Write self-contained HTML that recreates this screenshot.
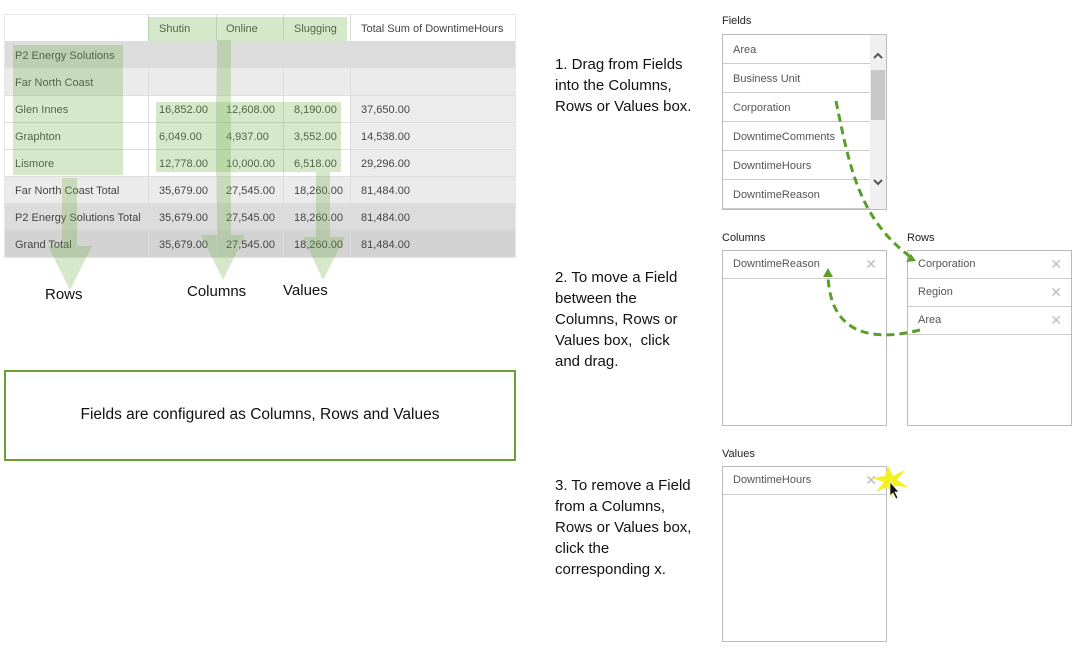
<!DOCTYPE html><html><head><style>
body{margin:0;width:1088px;height:656px;background:#fff;position:relative;font-family:"Segoe UI","Liberation Sans",sans-serif;overflow:hidden}
.a{position:absolute}
.c{position:absolute;font-size:11px;color:#444;line-height:27px}
.g{position:absolute;background:rgba(120,180,80,.3)}
.box{position:absolute;border:1px solid #bbb;background:#fff}
.it{height:27px;border-bottom:1px solid #ccc;font-size:11px;color:#555;line-height:27px;padding-left:10px;position:relative}
.x{position:absolute;right:9px;top:0;color:#bbb;font-size:14px}
.lbl{position:absolute;font-size:11px;color:#222}
.ins{position:absolute;left:555px;font-size:15px;line-height:21px;color:#111}
</style></head><body>
<div class="a" style="left:4px;top:14px;width:512px;height:244px;background:#e6e6e6"></div>
<div class="a" style="left:5px;top:15px;width:510px;height:26px;background:#fff"></div>
<div class="a" style="left:5px;top:41px;width:510px;height:27px;background:#dcdcdc"></div>
<div class="a" style="left:5px;top:68px;width:510px;height:27px;background:#ebebeb"></div>
<div class="a" style="left:5px;top:95px;width:345px;height:81px;background:#fff"></div>
<div class="a" style="left:350px;top:95px;width:165px;height:81px;background:#ececec"></div>
<div class="a" style="left:5px;top:176px;width:510px;height:27px;background:#ebebeb"></div>
<div class="a" style="left:5px;top:203px;width:510px;height:27px;background:#dcdcdc"></div>
<div class="a" style="left:5px;top:230px;width:510px;height:27px;background:#d3d3d3"></div>
<div class="a" style="left:148px;top:14px;width:1px;height:244px;background:#ddd"></div>
<div class="a" style="left:216px;top:14px;width:1px;height:244px;background:#ddd"></div>
<div class="a" style="left:283px;top:14px;width:1px;height:244px;background:#ddd"></div>
<div class="a" style="left:350px;top:14px;width:1px;height:244px;background:#ddd"></div>
<div class="a" style="left:5px;top:95px;width:510px;height:1px;background:#ddd"></div>
<div class="a" style="left:5px;top:122px;width:510px;height:1px;background:#ddd"></div>
<div class="a" style="left:5px;top:149px;width:510px;height:1px;background:#ddd"></div>
<div class="a" style="left:5px;top:176px;width:510px;height:1px;background:#ddd"></div>
<div class="c" style="left:159px;top:16px">Shutin</div><div class="c" style="left:226px;top:16px">Online</div><div class="c" style="left:294px;top:16px">Slugging</div><div class="c" style="left:361px;top:16px">Total Sum of DowntimeHours</div>
<div class="c" style="left:15px;top:43px">P2 Energy Solutions</div>
<div class="c" style="left:15px;top:70px">Far North Coast</div>
<div class="c" style="left:15px;top:97px">Glen Innes</div><div class="c" style="left:159px;top:97px">16,852.00</div><div class="c" style="left:226px;top:97px">12,608.00</div><div class="c" style="left:294px;top:97px">8,190.00</div><div class="c" style="left:361px;top:97px">37,650.00</div>
<div class="c" style="left:15px;top:124px">Graphton</div><div class="c" style="left:159px;top:124px">6,049.00</div><div class="c" style="left:226px;top:124px">4,937.00</div><div class="c" style="left:294px;top:124px">3,552.00</div><div class="c" style="left:361px;top:124px">14,538.00</div>
<div class="c" style="left:15px;top:151px">Lismore</div><div class="c" style="left:159px;top:151px">12,778.00</div><div class="c" style="left:226px;top:151px">10,000.00</div><div class="c" style="left:294px;top:151px">6,518.00</div><div class="c" style="left:361px;top:151px">29,296.00</div>
<div class="c" style="left:15px;top:178px">Far North Coast Total</div><div class="c" style="left:159px;top:178px">35,679.00</div><div class="c" style="left:226px;top:178px">27,545.00</div><div class="c" style="left:294px;top:178px">18,260.00</div><div class="c" style="left:361px;top:178px">81,484.00</div>
<div class="c" style="left:15px;top:205px">P2 Energy Solutions Total</div><div class="c" style="left:159px;top:205px">35,679.00</div><div class="c" style="left:226px;top:205px">27,545.00</div><div class="c" style="left:294px;top:205px">18,260.00</div><div class="c" style="left:361px;top:205px">81,484.00</div>
<div class="c" style="left:15px;top:232px">Grand Total</div><div class="c" style="left:159px;top:232px">35,679.00</div><div class="c" style="left:226px;top:232px">27,545.00</div><div class="c" style="left:294px;top:232px">18,260.00</div><div class="c" style="left:361px;top:232px">81,484.00</div>
<div class="g" style="left:148px;top:17px;width:199px;height:24px"></div>
<div class="g" style="left:13px;top:45px;width:110px;height:130px"></div>
<div class="g" style="left:156px;top:102px;width:185px;height:70px"></div>
<svg class="a" style="left:0;top:0" width="520" height="300">
<g fill="rgba(120,180,80,.3)">
<polygon points="217,40 231,40 231,235 245,235 223,280 201,235 217,235"/>
<polygon points="62,178 77,178 77,246 92,246 70,290 48,246 62,246"/>
<polygon points="316,172 330,172 330,237 345,237 323,280 303,237 316,237"/>
</g></svg>
<div class="a" style="left:45px;top:286px;font-size:15px;color:#111">Rows</div>
<div class="a" style="left:187px;top:283px;font-size:15px;color:#111">Columns</div>
<div class="a" style="left:283px;top:282px;font-size:15px;color:#111">Values</div>
<div class="a" style="left:4px;top:370px;width:508px;height:87px;border:2px solid #6aa232;font-size:15.5px;color:#111;text-align:center;line-height:85px">Fields are configured as Columns, Rows and Values</div>
<div class="ins" style="top:54px">1. Drag from Fields<br>into the Columns,<br>Rows or Values box.</div>
<div class="ins" style="top:267px">2. To move a Field<br>between the<br>Columns, Rows or<br>Values box,&nbsp; click<br>and drag.</div>
<div class="ins" style="top:475px">3. To remove a Field<br>from a Columns,<br>Rows or Values box,<br>click the<br>corresponding x.</div>
<div class="lbl" style="left:722px;top:15px">Fields</div>
<div class="box" style="left:722px;top:34px;width:163px;height:174px;overflow:hidden">
<div style="width:147px">
<div class="it" style="height:28px;line-height:30px">Area</div><div class="it" style="height:28px;line-height:30px">Business Unit</div><div class="it" style="height:28px;line-height:30px">Corporation</div><div class="it" style="height:28px;line-height:30px">DowntimeComments</div><div class="it" style="height:28px;line-height:30px">DowntimeHours</div><div class="it" style="height:28px;line-height:30px">DowntimeReason</div></div>
<div class="a" style="left:147px;top:0;width:16px;height:174px;background:#f0f0f0"></div>
<div class="a" style="left:148px;top:35px;width:14px;height:50px;background:#c8c8c8"></div>
<svg class="a" style="left:148px;top:14px" width="14" height="140"><path d="M3 9 L7 5 L11 9" stroke="#555" stroke-width="2" fill="none"/><path d="M3 131 L7 135 L11 131" stroke="#555" stroke-width="2" fill="none"/></svg>
</div>
<div class="lbl" style="left:722px;top:232px">Columns</div>
<div class="box" style="left:722px;top:250px;width:163px;height:174px"><div class="it">DowntimeReason<span class="x">✕</span></div></div>
<div class="lbl" style="left:907px;top:232px">Rows</div>
<div class="box" style="left:907px;top:250px;width:163px;height:174px"><div class="it">Corporation<span class="x">✕</span></div><div class="it">Region<span class="x">✕</span></div><div class="it">Area<span class="x">✕</span></div></div>
<div class="lbl" style="left:722px;top:448px">Values</div>
<div class="box" style="left:722px;top:466px;width:163px;height:174px"><div class="it">DowntimeHours<span class="x">✕</span></div></div>
<svg class="a" style="left:0;top:0" width="1088" height="656">
<g stroke="#5a9e2a" stroke-width="3" fill="none" stroke-dasharray="8,5">
<path d="M836 101 C850 170 860 220 912 258"/>
<path d="M920 330 C880 340 830 340 828 275"/>
</g>
<polygon points="916,261 906,262 911,254" fill="#5a9e2a"/>
<polygon points="828,268 823,277 833,277" fill="#5a9e2a"/>
<polygon points="888,466 893,476 905,470 897,480 908,487 895,486 892,498 888,487 876,492 884,482 872,478 885,476" fill="#f5f020"/>
<path d="M890 482 L890 496 L893 493 L896 499 L898 498 L895 492 L899 492 Z" fill="#111" stroke="#fff" stroke-width=".7"/>
</svg>
</body></html>
